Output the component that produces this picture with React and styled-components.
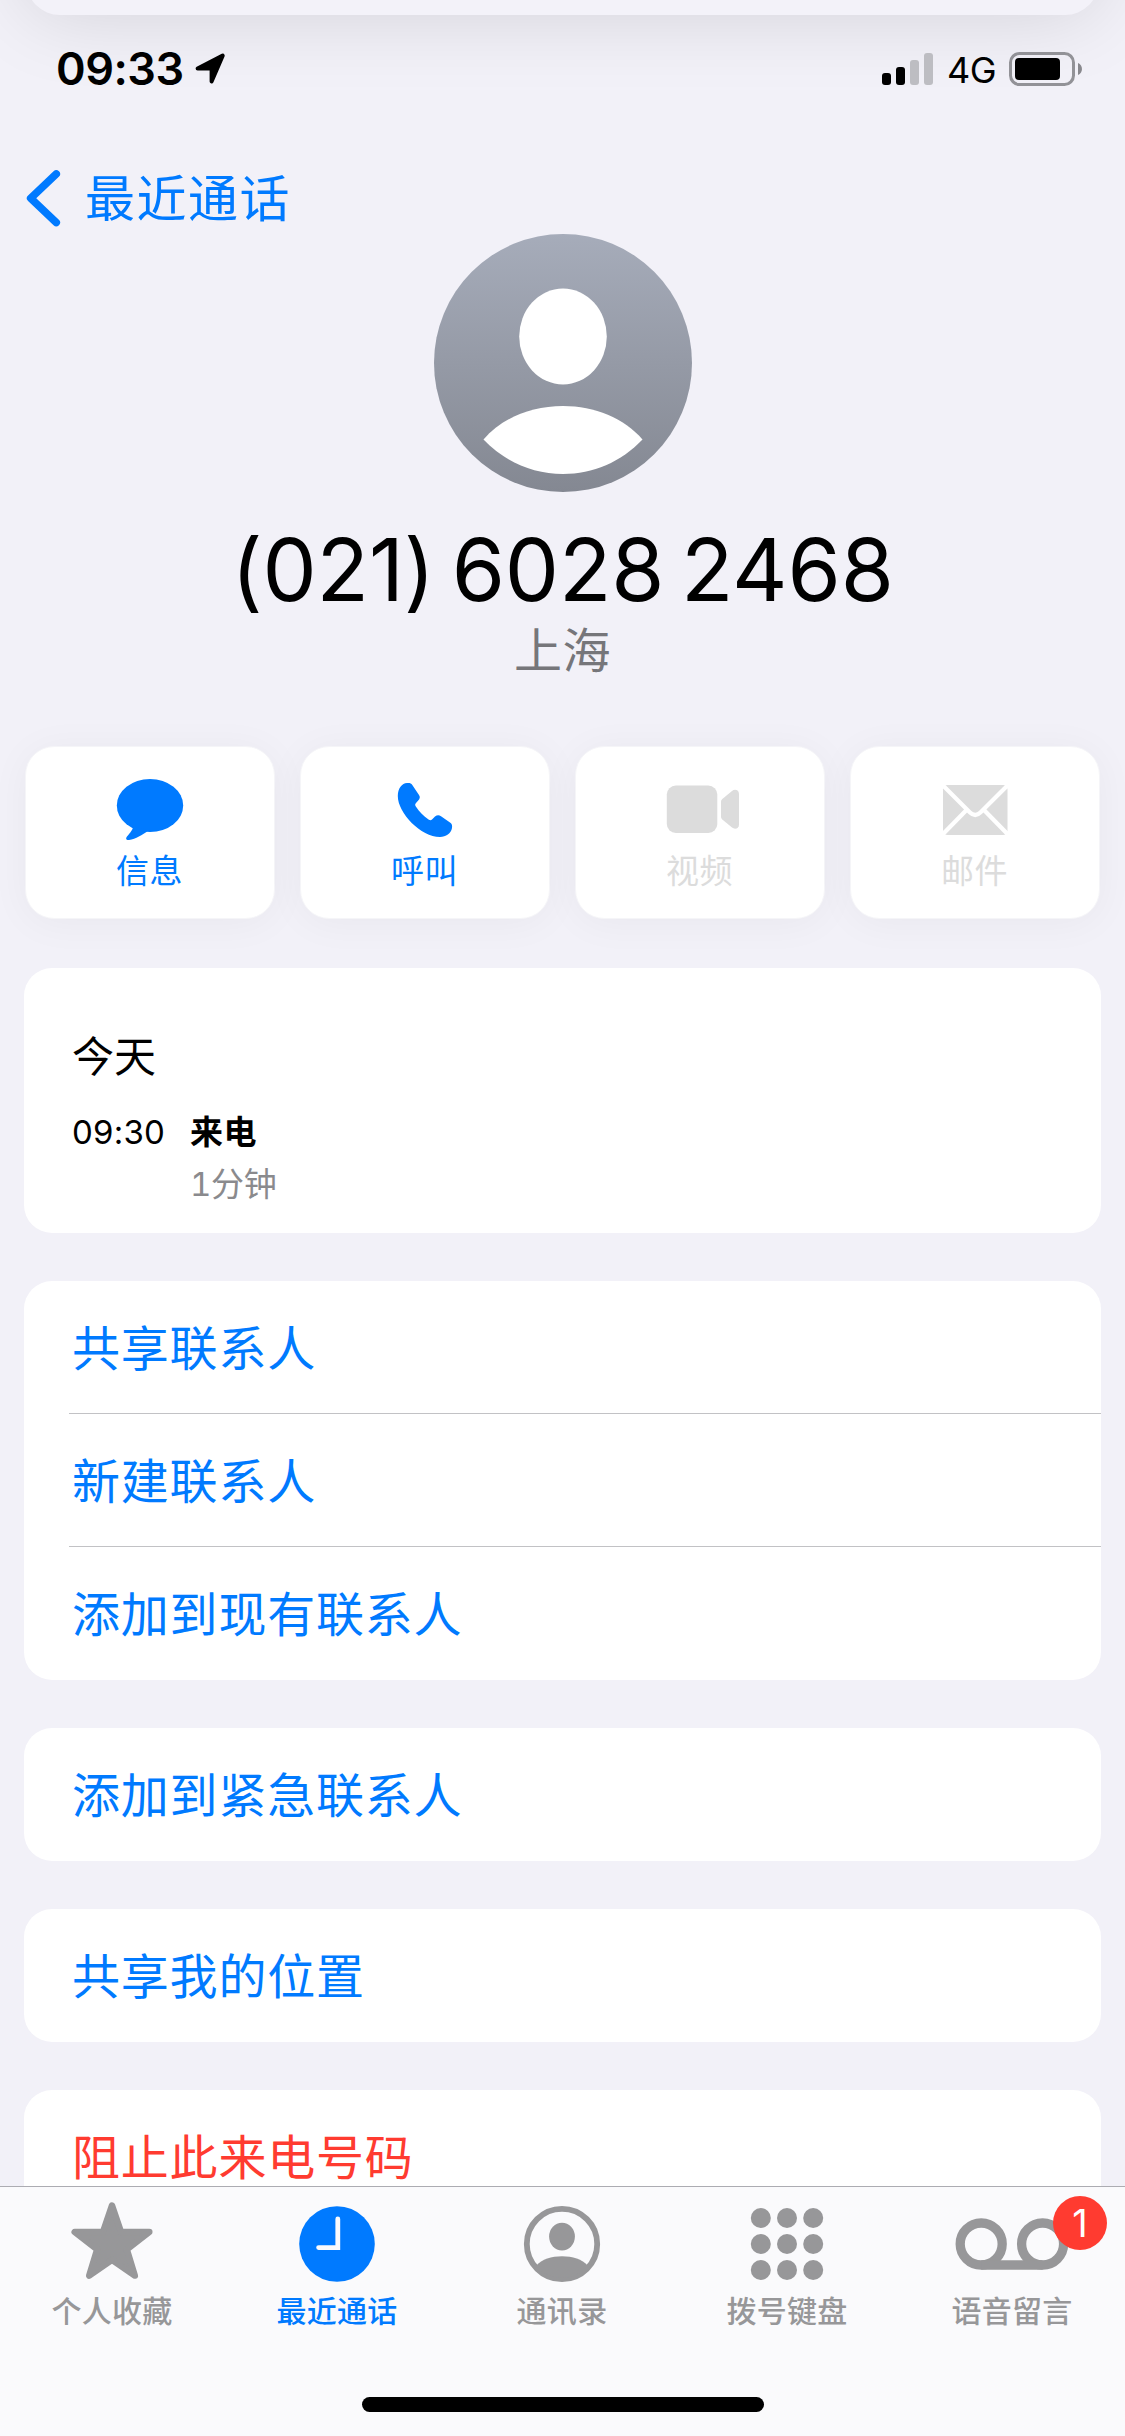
import React from "react";
import styled, { createGlobalStyle } from "styled-components";

const BLUE = "#007aff";
const RED = "#ff3b30";
const MUTED = "#979799";
const DISABLED = "#dcdcdc";

const GlobalStyle = createGlobalStyle`
  * { box-sizing: border-box; }
  body {
    margin: 0;
    background: #f2f1f8;
    font-family: Inter, "Noto Sans CJK SC", sans-serif;
    color: #000;
  }
`;

const Screen = styled.div`
  position: relative;
  display: flex;
  flex-direction: column;
  width: 1125px;
  height: 2436px;
  overflow: hidden;
  background: #f2f1f8;
`;

const PreviousSheet = styled.div`
  position: absolute;
  top: -385px;
  left: 26px;
  right: 26px;
  height: 400px;
  border-radius: 34px;
  background: #f3f2f9;
  box-shadow: 0 0 80px rgba(0, 0, 0, 0.13);
`;

const StatusBar = styled.header`
  position: relative;
  display: flex;
  align-items: center;
  flex: none;
  height: 132px;
  padding: 6px 42px 0 56px;
`;

const Clock = styled.span`
  font-size: 45px;
  font-weight: 600;
  line-height: 60px;
  letter-spacing: -0.5px;
`;

const LocationArrow = styled.svg`
  width: 32px;
  height: 32px;
  margin-left: 10px;
`;

const StatusRight = styled.div`
  display: flex;
  align-items: center;
  margin-left: auto;
`;

const SignalBars = styled.div`
  display: flex;
  align-items: flex-end;
  gap: 5px;
  height: 32px;
`;

const SignalBar = styled.i`
  width: 9px;
  height: ${(p) => p.$height}px;
  border-radius: 3px;
  background: ${(p) => (p.$on ? "#000" : "#bdbdc2")};
`;

const Network = styled.span`
  width: 76px;
  padding: 2px 0 0 14px;
  font-size: 36px;
  font-weight: 400;
  line-height: 44px;
  letter-spacing: -0.5px;
`;

const Battery = styled.svg`
  width: 74px;
  height: 34px;
`;

const NavBar = styled.nav`
  position: relative;
  flex: none;
  height: 102px;
  padding: 38px 0 0 26px;
`;

const BackButton = styled.a`
  display: inline-flex;
  align-items: center;
  height: 56px;
  color: ${BLUE};
`;

const BackLabel = styled.span`
  padding-top: 2px;
  font-size: 50px;
  letter-spacing: 1.5px;
  line-height: 56px;
`;

const Chevron = styled.svg`
  width: 36px;
  height: 58px;
  margin-right: 23px;
`;

const Profile = styled.section`
  display: flex;
  flex: none;
  flex-direction: column;
  align-items: center;
`;

const Avatar = styled.svg`
  width: 258px;
  height: 258px;
`;

const PhoneNumber = styled.h1`
  margin: 28px 0 0;
  font-size: 86px;
  font-weight: 400;
  line-height: 100px;
  letter-spacing: -0.1px;
  word-spacing: -7.5px;
  white-space: nowrap;
`;

const Region = styled.p`
  margin: 1px 0 0;
  color: #76767a;
  font-size: 48px;
  line-height: 60px;
  letter-spacing: 0.6px;
`;

const Actions = styled.div`
  display: grid;
  flex: none;
  grid-template-columns: repeat(4, 250px);
  gap: 25px;
  margin-top: 65px;
  padding: 0 25px;
`;

const ActionCard = styled.button`
  display: flex;
  flex-direction: column;
  align-items: center;
  height: 173px;
  padding: 30px 0 0;
  border: 1px solid #f5f5f8;
  border-radius: 29px;
  background: #fff;
  box-shadow: 0 4px 40px rgba(0, 0, 0, 0.045);
  color: ${(p) => (p.$disabled ? DISABLED : BLUE)};
  font: inherit;
`;

const ActionIcon = styled.svg`
  width: 80px;
  height: 66px;
`;

const ActionLabel = styled.span`
  margin-top: 8px;
  padding-right: 1px;
  font-size: 33px;
  line-height: 40px;
  letter-spacing: 0.6px;
`;

const Groups = styled.main`
  display: flex;
  flex: none;
  flex-direction: column;
  gap: 48px;
  padding: 49px 24px 0;
`;

const Card = styled.section`
  position: relative;
  overflow: hidden;
  border-radius: 28px;
  background: #fff;
`;

const CallLog = styled(Card)`
  height: 265px;
  padding: 63px 48px 0;
`;

const Day = styled.h2`
  margin: 0;
  font-size: 42px;
  font-weight: 400;
  line-height: 52px;
`;

const CallEntry = styled.div`
  display: grid;
  grid-template-columns: 118px 1fr;
  margin-top: 23px;
  font-size: 33px;
  line-height: 52px;
`;

const CallTime = styled.span`
  letter-spacing: 0.2px;
`;

const CallKind = styled.span`
  font-weight: 600;
  letter-spacing: 0.5px;
`;

const CallLength = styled.span`
  grid-column: 2;
  color: #8a8a8d;
  font-variant-numeric: tabular-nums;
  letter-spacing: -0.3px;
`;

const Row = styled.a`
  display: flex;
  align-items: center;
  height: 133px;
  padding: 3px 0 0 48px;
  color: ${(p) => (p.$danger ? RED : BLUE)};
  font-size: 48px;
  line-height: 60px;
  letter-spacing: 0.8px;
`;

const Separator = styled.hr`
  height: 1px;
  margin: -1px 0 0 45px;
  border: 0;
  background: #c2c2c5;
`;

const TabBar = styled.footer`
  position: absolute;
  right: 0;
  bottom: 0;
  left: 0;
  height: 250px;
  border-top: 1px solid #acacb2;
  background: #fafafc;
`;

const Tabs = styled.div`
  display: grid;
  grid-template-columns: repeat(5, 1fr);
  height: 210px;
  padding-top: 11px;
`;

const Tab = styled.a`
  position: relative;
  display: flex;
  flex-direction: column;
  align-items: center;
  padding-right: 1px;
  color: ${(p) => (p.$active ? BLUE : MUTED)};
`;

const TabIcon = styled.svg`
  width: 120px;
  height: 86px;
`;

const TabLabel = styled.span`
  margin-top: 9px;
  font-size: 30px;
  font-weight: 500;
  line-height: 36px;
  letter-spacing: 0.3px;
`;

const Badge = styled.span`
  position: absolute;
  top: -2px;
  left: 153px;
  width: 54px;
  height: 54px;
  border-radius: 50%;
  background: ${RED};
  color: #fff;
  font-size: 38px;
  line-height: 54px;
  text-align: center;
`;

const HomeIndicator = styled.div`
  width: 402px;
  height: 15px;
  margin: 0 auto;
  border-radius: 8px;
  background: #000;
`;

const BubbleGlyph = () => (
  <ActionIcon viewBox="0 0 80 66" fill="currentColor">
    <ellipse cx="40" cy="30.4" rx="33.2" ry="26.5" transform="translate(0 -1.9)" />
    <path d="M23 49 C23.5 52 20 56 17 59.5 C15.2 62 16.5 63.3 19 63 C26 62 32 58 38.5 53.6 Z" />
  </ActionIcon>
);

const PhoneGlyph = () => (
  <ActionIcon viewBox="0 0 80 66" fill="currentColor">
    <path d="M12.8 19 C12.8 11 17 6.5 22 6 C24.5 5.7 26 6 27.3 8 L34 18 C35.4 20.2 34.9 21.6 33.2 23.6 L31 26 C29.8 27.4 30 28.3 31 29.8 C34.5 35 38.5 39.2 43.5 42.6 C45 43.5 46 43.5 47 42.5 L50 39.6 C52 38 54 38 56 39.2 L65 45.6 C67 47 67.4 48.5 67 51 C66 56.5 61 60 55 60 C36 60 12.8 36 12.8 19 Z" />
  </ActionIcon>
);

const VideoGlyph = () => (
  <ActionIcon viewBox="0 0 80 66" fill="currentColor">
    <rect x="6.8" y="8.5" width="50.5" height="47.5" rx="9" />
    <path d="M61 25 C61 23.6 61.3 22.8 62.3 21.9 L72 13.9 C75 11.6 79 13 79 17 V47.5 C79 51.5 75 53 72 50.6 L62.3 42.4 C61.3 41.5 61 40.7 61 39.5 Z" />
  </ActionIcon>
);

const MailGlyph = () => (
  <ActionIcon viewBox="0 0 80 66">
    <rect x="8" y="8" width="64.5" height="50" rx="4.5" fill="currentColor" />
    <g fill="none" stroke="#fff" strokeWidth="4.2">
      <path d="M8 8.5 L35 35.5 Q40.2 40.5 45.4 35.5 L72.5 8.5" />
      <path d="M32 32.5 L8 57" />
      <path d="M48.5 32.5 L72.5 57" />
    </g>
  </ActionIcon>
);

const StarGlyph = () => (
  <TabIcon viewBox="-60 0 120 86">
    <path
      d="M0 7.5 L9 34 H37.3 L14.8 51.5 L22.8 77.6 L0 61.8 L-22.8 77.6 L-14.8 51.5 L-37.3 34 H-9 Z"
      fill="currentColor"
      stroke="currentColor"
      strokeWidth="6.5"
      strokeLinejoin="round"
    />
  </TabIcon>
);

const ClockGlyph = () => (
  <TabIcon viewBox="-60 0 120 86">
    <circle cx="0" cy="46" r="37.8" fill="currentColor" />
    <path d="M0.8 21 V49.6 H-18.4" fill="none" stroke="#fafafc" strokeWidth="4.8" strokeLinecap="round" />
  </TabIcon>
);

const ContactGlyph = () => (
  <TabIcon viewBox="-60 0 120 86">
    <circle cx="0" cy="46" r="35.2" fill="none" stroke="currentColor" strokeWidth="5.8" />
    <ellipse cx="0" cy="38.6" rx="12.9" ry="13.9" fill="currentColor" />
    <path d="M-26 68 C-20 61 -10.5 58.2 0 58.2 C10.5 58.2 20 61 26 68 A34.5 34.5 0 0 1 -26 68 Z" fill="currentColor" />
  </TabIcon>
);

const KeypadGlyph = () => (
  <TabIcon viewBox="-60 0 120 86" fill="currentColor">
    {[20, 46, 72].map((y) =>
      [-26.2, 0, 26.2].map((x) => <circle key={`${x}:${y}`} cx={x} cy={y} r="10" />)
    )}
  </TabIcon>
);

const VoicemailGlyph = () => (
  <TabIcon viewBox="-60 0 120 86" fill="none" stroke="currentColor" strokeWidth="9.3">
    <circle cx="-30.8" cy="46" r="21" />
    <circle cx="30.6" cy="46" r="21" />
    <path d="M-30.8 67 H30.6" />
  </TabIcon>
);

const actions = [
  { label: "信息", Glyph: BubbleGlyph },
  { label: "呼叫", Glyph: PhoneGlyph },
  { label: "视频", Glyph: VideoGlyph, disabled: true },
  { label: "邮件", Glyph: MailGlyph, disabled: true },
];

const groups = [
  [{ label: "共享联系人" }, { label: "新建联系人" }, { label: "添加到现有联系人" }],
  [{ label: "添加到紧急联系人" }],
  [{ label: "共享我的位置" }],
  [{ label: "阻止此来电号码", danger: true }],
];

const tabs = [
  { label: "个人收藏", Glyph: StarGlyph },
  { label: "最近通话", Glyph: ClockGlyph, active: true },
  { label: "通讯录", Glyph: ContactGlyph },
  { label: "拨号键盘", Glyph: KeypadGlyph },
  { label: "语音留言", Glyph: VoicemailGlyph, badge: 1 },
];

const signal = [
  { height: 12, on: true },
  { height: 18, on: true },
  { height: 25, on: false },
  { height: 32, on: false },
];

export default function App() {
  return (
    <>
      <GlobalStyle />
      <Screen>
        <PreviousSheet />
        <StatusBar>
          <Clock>09:33</Clock>
          <LocationArrow viewBox="0 0 32 32">
            <path
              d="M28.7 2.6 L17.6 28.4 V15.6 H3.6 Z"
              fill="#000"
              stroke="#000"
              strokeWidth="4"
              strokeLinejoin="round"
            />
          </LocationArrow>
          <StatusRight>
            <SignalBars>
              {signal.map((bar) => (
                <SignalBar key={bar.height} $height={bar.height} $on={bar.on} />
              ))}
            </SignalBars>
            <Network>4G</Network>
            <Battery viewBox="0 0 74 34">
              <rect x="1.5" y="1.5" width="63" height="31" rx="9" fill="none" stroke="#929297" strokeWidth="3" />
              <rect x="6" y="6" width="45" height="22" rx="4" fill="#000" />
              <path d="M69 11 C74.3 13 74.3 21 69 23 Z" fill="#88888d" />
            </Battery>
          </StatusRight>
        </StatusBar>

        <NavBar>
          <BackButton>
            <Chevron viewBox="0 0 36 58">
              <path d="M30.2 5 L4.7 29.2 L30.2 53.5" fill="none" stroke={BLUE} strokeWidth="7.7" strokeLinecap="round" strokeLinejoin="round" />
            </Chevron>
            <BackLabel>最近通话</BackLabel>
          </BackButton>
        </NavBar>

        <Profile>
          <Avatar viewBox="0 0 258 258">
            <defs>
              <linearGradient id="avatarFill" x1="0" y1="0" x2="0" y2="1">
                <stop offset="0" stopColor="#a6acba" />
                <stop offset="1" stopColor="#848892" />
              </linearGradient>
            </defs>
            <circle cx="129" cy="129" r="129" fill="url(#avatarFill)" />
            <ellipse cx="129" cy="102.5" rx="43.8" ry="48" fill="#fff" />
            <path d="M49.5 205.5 C68 184 97 172 129 172 C161 172 190 184 208.5 205.5 C187 228 159 240 129 240 C99 240 71 228 49.5 205.5 Z" fill="#fff" />
          </Avatar>
          <PhoneNumber>(021) 6028 2468</PhoneNumber>
          <Region>上海</Region>
        </Profile>

        <Actions>
          {actions.map(({ label, Glyph, disabled }) => (
            <ActionCard key={label} $disabled={disabled}>
              <Glyph />
              <ActionLabel>{label}</ActionLabel>
            </ActionCard>
          ))}
        </Actions>

        <Groups>
          <CallLog>
            <Day>今天</Day>
            <CallEntry>
              <CallTime>09:30</CallTime>
              <CallKind>来电</CallKind>
              <CallLength>1分钟</CallLength>
            </CallEntry>
          </CallLog>
          {groups.map((rows) => (
            <Card key={rows[0].label}>
              {rows.map((row, i) => (
                <React.Fragment key={row.label}>
                  <Row $danger={row.danger}>{row.label}</Row>
                  {i < rows.length - 1 && <Separator />}
                </React.Fragment>
              ))}
            </Card>
          ))}
        </Groups>

        <TabBar>
          <Tabs>
            {tabs.map(({ label, Glyph, active, badge }) => (
              <Tab key={label} $active={active}>
                <Glyph />
                <TabLabel>{label}</TabLabel>
                {badge && <Badge>{badge}</Badge>}
              </Tab>
            ))}
          </Tabs>
          <HomeIndicator />
        </TabBar>
      </Screen>
    </>
  );
}
